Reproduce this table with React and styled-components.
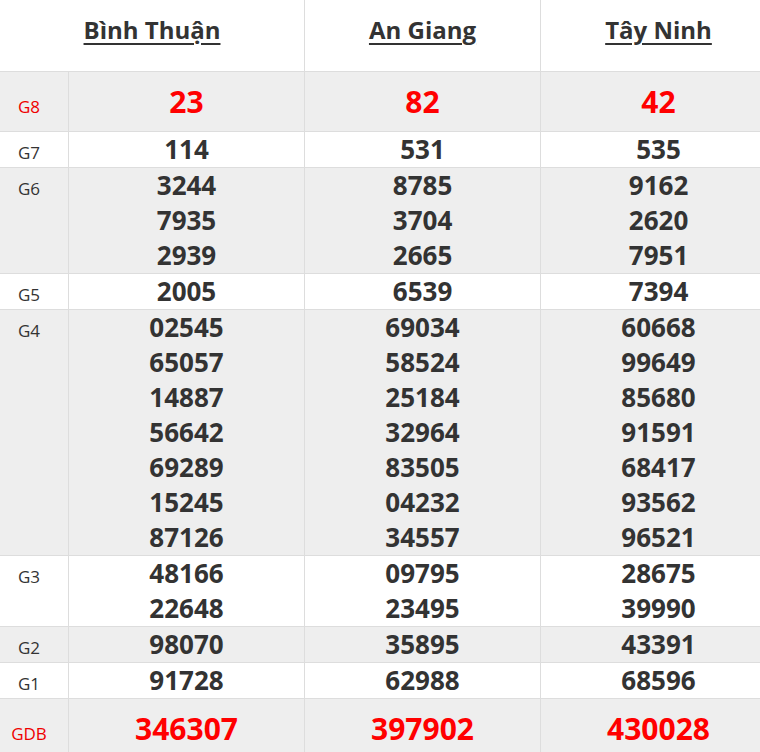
import React from "react";
import styled, { createGlobalStyle } from "styled-components";

const GlobalStyle = createGlobalStyle`
  html, body {
    margin: 0;
    padding: 0;
    overflow: hidden;
    background: #ffffff;
  }
  body {
    font-family: "Open Sans", "Liberation Sans", sans-serif;
    color: #333333;
  }
`;

const ResultTable = styled.table`
  border-collapse: separate;
  border-spacing: 0;
  table-layout: fixed;
  width: 777px;
`;

const LabelCol = styled.col`
  width: 69px;
`;

const ProvinceCol = styled.col`
  width: 236px;
`;

const Row = styled.tr`
  background-color: ${(p) => (p.$alt ? "#eeeeee" : "#ffffff")};
`;

const HeadCell = styled.th`
  padding: 0 0 12px;
  line-height: 59px;
  font-size: 24px;
  font-weight: 700;
  color: #333333;
  text-align: center;
  vertical-align: baseline;
  border-right: 1px solid #dddddd;
  border-bottom: 1px solid #dddddd;
  background: #ffffff;

  span {
    text-decoration: underline;
    text-decoration-thickness: 2px;
    text-underline-offset: 4px;
  }
`;

const LabelCell = styled.td`
  padding: 0 10px 0 0;
  font-size: 17px;
  line-height: 20px;
  color: ${(p) => (p.$red ? "#ee0000" : "#333333")};
  text-align: center;
  vertical-align: baseline;
  border-right: 1px solid #dddddd;
  border-bottom: 1px solid #dddddd;
`;

const NumCell = styled.td`
  padding: 0;
  font-size: ${(p) => (p.$big ? "30px" : "26px")};
  line-height: ${(p) => (p.$big ? "59px" : "35px")};
  font-weight: 700;
  color: ${(p) => (p.$big ? "#ff0000" : "#333333")};
  text-align: center;
  vertical-align: baseline;
  border-right: 1px solid #dddddd;
  border-bottom: 1px solid #dddddd;
`;

const Num = styled.div`
  display: block;
`;

const provinces = ["Bình Thuận", "An Giang", "Tây Ninh"];

const prizes = [
  { label: "G8", big: true, values: [["23"], ["82"], ["42"]] },
  { label: "G7", values: [["114"], ["531"], ["535"]] },
  {
    label: "G6",
    values: [
      ["3244", "7935", "2939"],
      ["8785", "3704", "2665"],
      ["9162", "2620", "7951"],
    ],
  },
  { label: "G5", values: [["2005"], ["6539"], ["7394"]] },
  {
    label: "G4",
    values: [
      ["02545", "65057", "14887", "56642", "69289", "15245", "87126"],
      ["69034", "58524", "25184", "32964", "83505", "04232", "34557"],
      ["60668", "99649", "85680", "91591", "68417", "93562", "96521"],
    ],
  },
  {
    label: "G3",
    values: [
      ["48166", "22648"],
      ["09795", "23495"],
      ["28675", "39990"],
    ],
  },
  { label: "G2", values: [["98070"], ["35895"], ["43391"]] },
  { label: "G1", values: [["91728"], ["62988"], ["68596"]] },
  { label: "GDB", big: true, values: [["346307"], ["397902"], ["430028"]] },
];

export default function App() {
  return (
    <>
      <GlobalStyle />
      <ResultTable>
        <colgroup>
          <LabelCol />
          <ProvinceCol />
          <ProvinceCol />
          <ProvinceCol />
        </colgroup>
        <thead>
          <tr>
            {provinces.map((name, i) => (
              <HeadCell key={name} colSpan={i === 0 ? 2 : 1}>
                <span>{name}</span>
              </HeadCell>
            ))}
          </tr>
        </thead>
        <tbody>
          {prizes.map((prize, idx) => (
            <Row key={prize.label} $alt={idx % 2 === 0}>
              <LabelCell $red={prize.big}>{prize.label}</LabelCell>
              {prize.values.map((list, c) => (
                <NumCell key={c} $big={prize.big}>
                  {list.map((v) => (
                    <Num key={v}>{v}</Num>
                  ))}
                </NumCell>
              ))}
            </Row>
          ))}
        </tbody>
      </ResultTable>
    </>
  );
}
